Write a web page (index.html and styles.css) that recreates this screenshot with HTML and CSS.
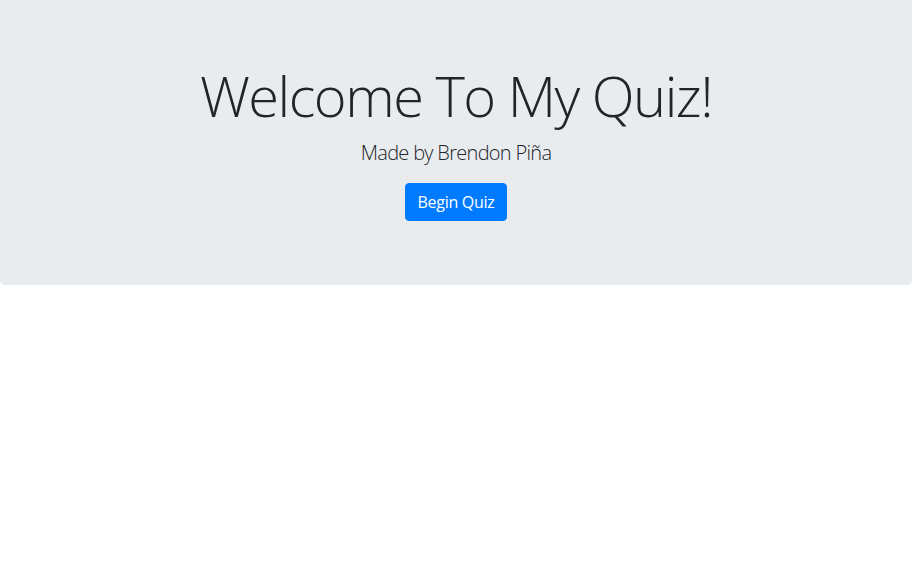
FILE: index.html
```html
<!DOCTYPE html>
<html lang="en">
<head>
<meta charset="utf-8">
<title>Quiz</title>
<link rel="stylesheet" href="styles.css">
</head>
<body>
<div class="jumbotron">
  <h1 class="display">Welcome To My Quiz!</h1>
  <p class="lead">Made by Brendon Piña</p>
  <button class="btn">Begin Quiz</button>
</div>
</body>
</html>
```
FILE: styles.css
```css
html, body {
  margin: 0;
  padding: 0;
  background: #fff;
}
body {
  font-family: "Open Sans", "Noto Sans", sans-serif;
  color: #212529;
  font-size: 16px;
  line-height: 1.5;
}
.jumbotron {
  background: #e9ecef;
  padding: 62px 32px 64px;
  border-radius: 0 0 4.8px 4.8px;
  display: flex;
  flex-direction: column;
  align-items: center;
  text-align: center;
}
.display {
  margin: 0 0 8px;
  font-size: 56px;
  font-weight: 300;
  line-height: 1.2;
  letter-spacing: -1.5px;
}
.lead {
  margin: 1px 0 15px;
  font-size: 20px;
  font-weight: 300;
  line-height: 1.5;
  letter-spacing: -0.7px;
}
.btn {
  font-family: inherit;
  font-size: 16px;
  line-height: 1.5;
  font-weight: 400;
  letter-spacing: -0.3px;
  color: #fff;
  background: #007bff;
  border: 1px solid #007bff;
  border-radius: 4px;
  padding: 6px 12px;
  cursor: pointer;
}
```
